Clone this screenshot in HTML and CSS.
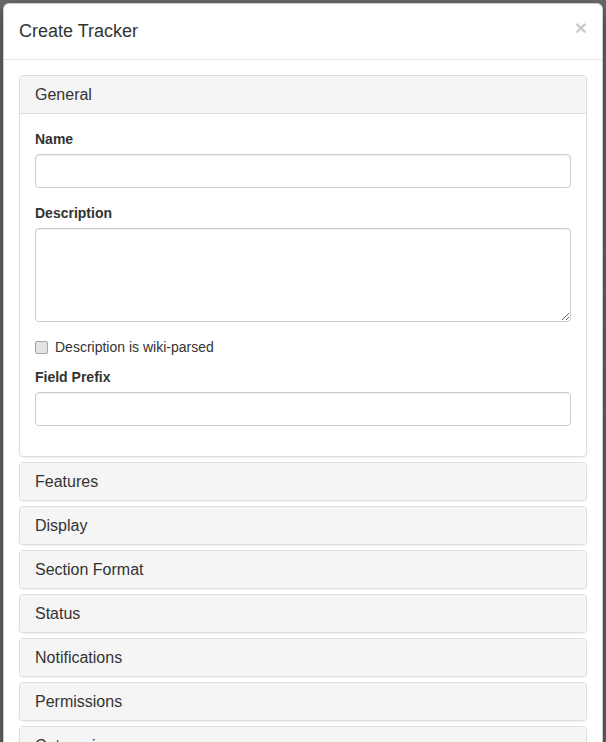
FILE: index.html
```html
<!DOCTYPE html>
<html lang="en">
<head>
<meta charset="utf-8">
<title>Create Tracker</title>
<link rel="stylesheet" href="styles.css">
</head>
<body>
<div class="modal-dialog">
  <div class="modal-content">
    <div class="modal-header">
      <h4 class="modal-title">Create Tracker</h4>
      <button type="button" class="close">&times;</button>
    </div>
    <div class="modal-body">
      <div class="panel open">
        <div class="panel-heading"><h4 class="panel-title">General</h4></div>
        <div class="panel-body">
          <div class="form-group">
            <label class="control-label">Name</label>
            <input type="text" class="form-control">
          </div>
          <div class="form-group">
            <label class="control-label">Description</label>
            <textarea class="form-control textarea"></textarea>
          </div>
          <div class="checkbox">
            <label class="check-label"><input type="checkbox" class="check"><span>Description is wiki-parsed</span></label>
          </div>
          <div class="form-group">
            <label class="control-label">Field Prefix</label>
            <input type="text" class="form-control">
          </div>
        </div>
      </div>
      <div class="panel"><div class="panel-heading"><h4 class="panel-title">Features</h4></div></div>
      <div class="panel"><div class="panel-heading"><h4 class="panel-title">Display</h4></div></div>
      <div class="panel"><div class="panel-heading"><h4 class="panel-title">Section Format</h4></div></div>
      <div class="panel"><div class="panel-heading"><h4 class="panel-title">Status</h4></div></div>
      <div class="panel"><div class="panel-heading"><h4 class="panel-title">Notifications</h4></div></div>
      <div class="panel"><div class="panel-heading"><h4 class="panel-title">Permissions</h4></div></div>
      <div class="panel"><div class="panel-heading"><h4 class="panel-title">Categories</h4></div></div>
    </div>
  </div>
</div>
</body>
</html>
```
FILE: styles.css
```css
* { box-sizing: border-box; }

html, body {
  margin: 0;
  padding: 0;
}

body {
  background-color: #6b6b6b;
  background-image:
    linear-gradient(#767676, #767676),
    linear-gradient(#767676, #767676),
    linear-gradient(#767676, #767676),
    linear-gradient(#767676, #767676),
    linear-gradient(#767676, #767676);
  background-repeat: no-repeat;
  background-size: 100% 1px;
  background-position: 0 255px, 0 290px, 0 325px, 0 360px, 0 410px;
  font-family: "Liberation Sans", Arial, sans-serif;
  font-size: 14px;
  line-height: 20px;
  color: #333;
  height: 742px;
  overflow: hidden;
}

.modal-dialog {
  width: 600px;
  margin: 3px auto 0;
}

.modal-content {
  background: #fff;
  border: 1px solid rgba(0, 0, 0, 0.2);
  border-radius: 6px;
  box-shadow: 0 5px 15px rgba(0, 0, 0, 0.5);
}

.modal-header {
  display: flex;
  justify-content: space-between;
  align-items: flex-start;
  padding: 15px;
  border-bottom: 1px solid #e5e5e5;
}

.modal-title {
  margin: 0;
  font-size: 18px;
  font-weight: 500;
  line-height: 25px;
  color: #333;
}

.close {
  margin-top: -2px;
  padding: 0;
  border: 0;
  background: transparent;
  font-family: "Liberation Sans", Arial, sans-serif;
  font-size: 21px;
  font-weight: 700;
  line-height: 1;
  color: #000;
  opacity: 0.2;
  text-shadow: 0 1px 0 #fff;
}

.modal-body {
  padding: 15px;
}

.panel {
  background: #fff;
  border: 1px solid #ddd;
  border-radius: 4px;
  box-shadow: 0 1px 1px rgba(0, 0, 0, 0.05);
  overflow: hidden;
}

.panel + .panel {
  margin-top: 5px;
}

.panel-heading {
  padding: 10px 15px;
  background: #f5f5f5;
  color: #333;
}

.open .panel-heading {
  border-bottom: 1px solid #ddd;
}

.panel-title {
  margin: 0;
  font-size: 16px;
  font-weight: 500;
  line-height: 17px;
}

.panel-body {
  padding: 15px 15px 0;
}

.panel-body::after {
  content: "";
  display: block;
  height: 15px;
}

.form-group {
  margin-bottom: 15px;
}

.control-label {
  display: block;
  margin-bottom: 5px;
  font-weight: 700;
}

.form-control {
  display: block;
  width: 100%;
  height: 34px;
  padding: 6px 12px;
  font-family: inherit;
  font-size: 14px;
  line-height: 20px;
  color: #555;
  background: #fff;
  border: 1px solid #ccc;
  border-radius: 4px;
  box-shadow: inset 0 1px 1px rgba(0, 0, 0, 0.075);
}

.textarea {
  height: 94px;
  resize: vertical;
}

.checkbox {
  margin: 10px 0;
}

.check-label {
  display: flex;
  align-items: center;
  font-weight: 400;
}

.check {
  appearance: none;
  -webkit-appearance: none;
  width: 13px;
  height: 13px;
  margin: 0 7px 0 0;
  border: 1px solid #a6a6a6;
  border-radius: 2px;
  background: #e4e4e4;
}
```
